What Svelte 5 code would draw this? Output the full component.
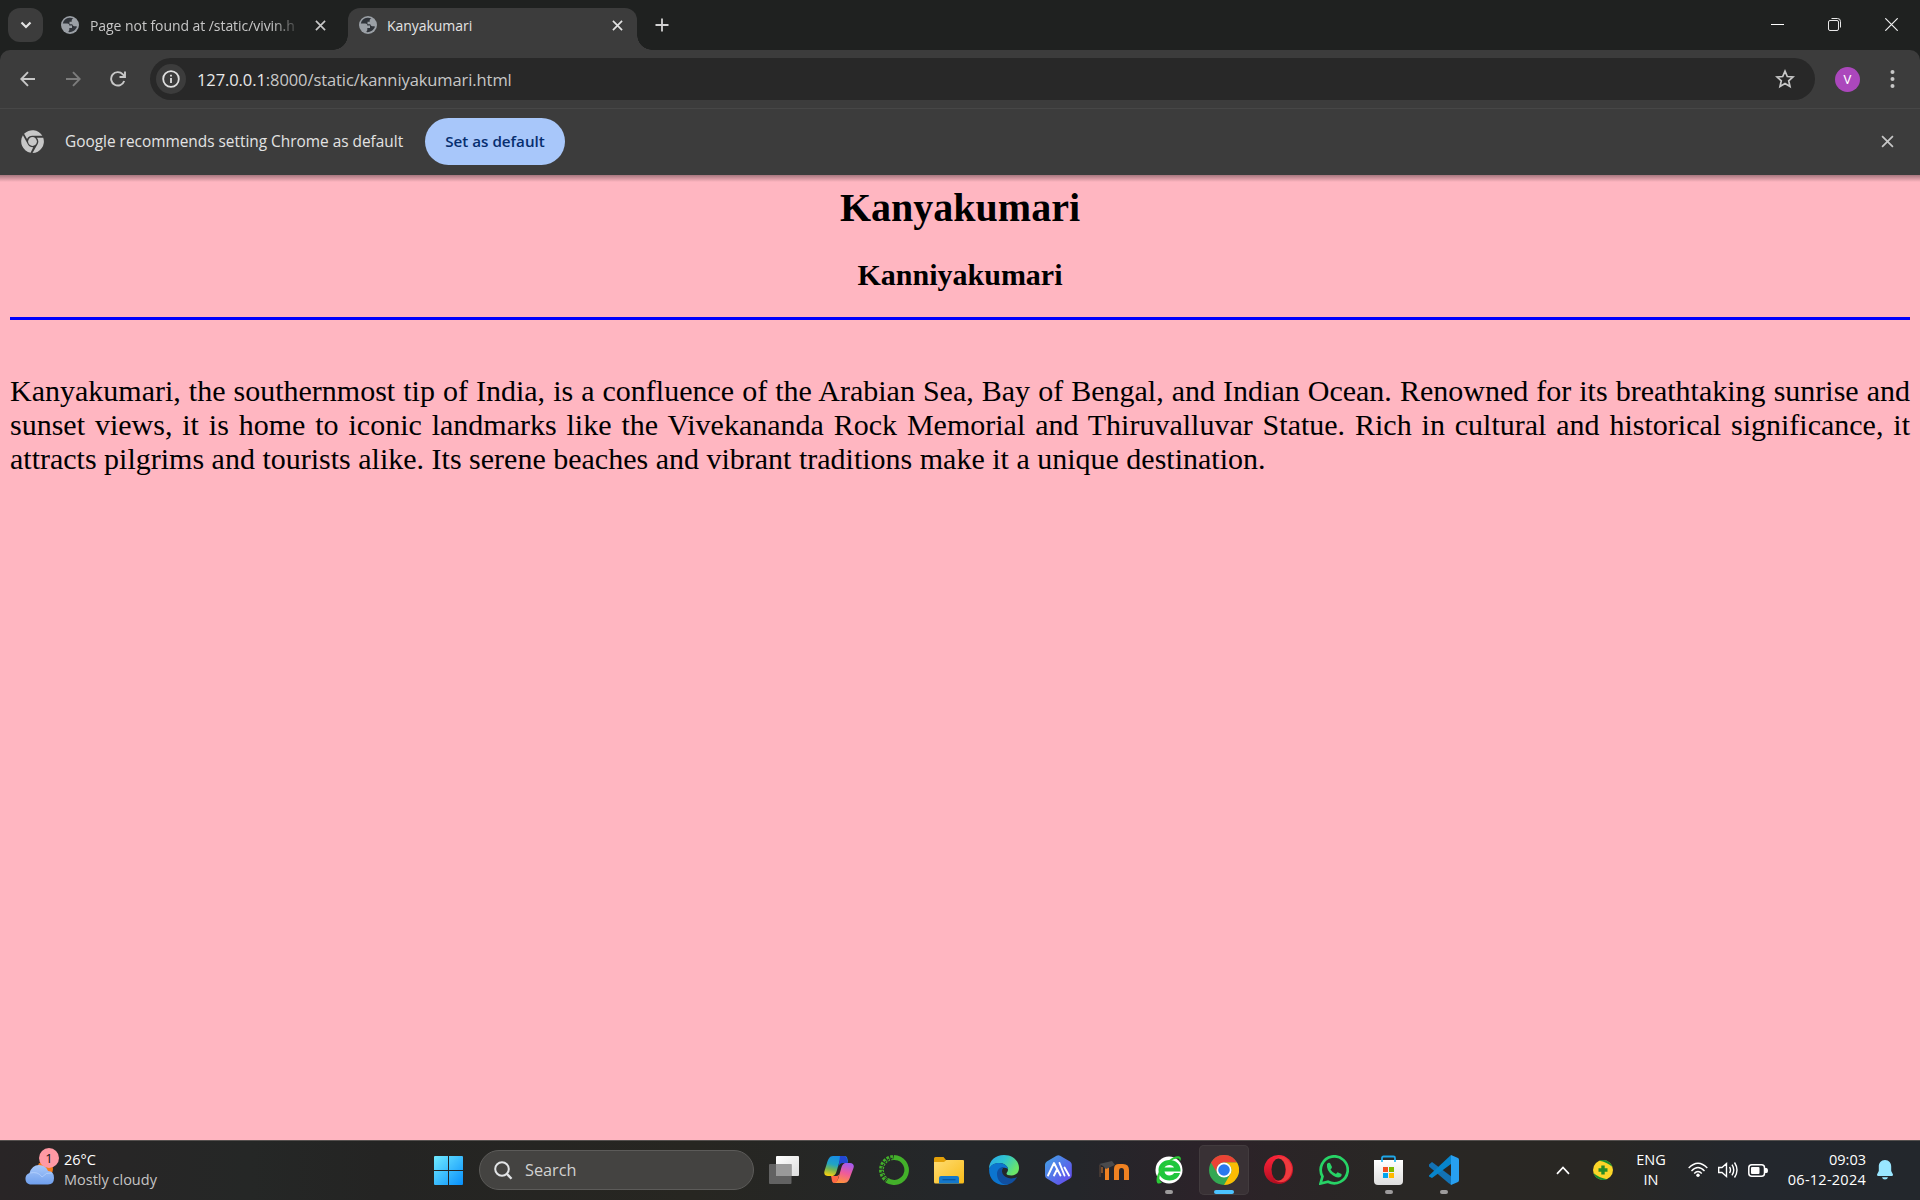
<script>
  const running = { chrome: 'active', ie: 'idle', store: 'idle', code: 'idle' };
  const apps = ['tasks', 'copilot', 'ring', 'folder', 'edge', 'hex', 'moodle', 'ie', 'chrome', 'opera', 'whatsapp', 'store', 'code'];
</script>

{#snippet globe()}
  <svg class="globe" width="18" height="18" viewBox="0 0 18 18">
    <circle cx="9" cy="9" r="9" fill="#9ba0a6" />
    <path d="M8.2 1.7C5 2 2.400 4.300 1.800 7.400L6.300 7.600C7.700 7.600 8.300 8.500 8.300 9.600H11V12H8.300V14.300L7 16C10.500 16.800 14.500 14.600 15.900 11L15.500 10.200H13.300C12.100 10.200 11.500 9.400 11.300 8.300H8.500V5.700H10.700V4.600C10.700 3.500 11.500 2.900 12.500 2.600C11.200 1.800 9.700 1.500 8.200 1.700Z" fill="#30343a" />
    <path d="M1.800 7.800L6 12V13.200L7.300 14.300V16C4 15.300 1.500 11.500 1.800 7.800Z" fill="#9ba0a6" />
  </svg>
{/snippet}

{#snippet cross(size, weight)}
  <svg width={size} height={size} viewBox="0 0 12 12" fill="none" stroke="currentColor" stroke-width={weight}>
    <path d="M1 1L11 11M11 1L1 11" />
  </svg>
{/snippet}

{#snippet appIcon(name)}
  <svg width="30" height="30" viewBox="0 0 30 30">
    {#if name === 'tasks'}
      <rect x="7" y="1" width="23" height="20" rx="1" fill="url(#tvw)" />
      <rect x="0" y="9" width="22.500" height="20" rx="1" fill="#6b6b6b" opacity=".88" />
      <path d="M7 9H22.500V21H7Z" fill="#9a9a9a" />
    {:else if name === 'copilot'}
      <path d="M21 1H9C5.500 1 4 4.500 3 8L.5 16C-.5 19.500 1.500 21 4 21H8C11 21 12 18.500 13 15L15 8C16 4.500 17 2.500 19 2.500L22 7H24C23.500 3 23 1 21 1Z" fill="url(#cpa)" />
      <path d="M16 1H20C22.500 1 23 3.500 24 8H19C16.500 8 15.500 9.500 14.500 12Z" fill="#2347d3" />
      <path d="M9 28H20C24 28 25.500 24.500 26.500 21L29.500 13C30.500 10 29 8 26 8H22C19 8 18 10.500 17 14L15 21C14 25 13 27 9 28Z" fill="url(#cpb)" />
      <path d="M7 21H12C14.500 21 15.500 19 16 17L14 24C13 27 11.500 28 10 28C7.500 28 8 24 7 21Z" fill="#ff6844" />
    {:else if name === 'ring'}
      <path d="M15 0A15 15 0 1 1 6.500 27.400L9.500 23A10 10 0 1 0 14 5Z" fill="#43b02a" />
      <path d="M14 2.500A12.500 12.500 0 0 0 7.500 25" fill="none" stroke="#43b02a" stroke-width="4.800" stroke-dasharray="2.500 1.200" />
      <path d="M13.500 3.500A11.500 11.500 0 0 0 6.500 23" fill="none" stroke="#25302a" stroke-width="1.300" stroke-dasharray="1.500 2" />
    {:else if name === 'folder'}
      <path d="M0 3.500A1.500 1.500 0 0 1 1.500 2H9.500L12 5H20V12H0Z" fill="#e3a008" />
      <path d="M0 7H10L12.500 5H29A1 1 0 0 1 30 6V27A1.500 1.500 0 0 1 28.500 28.500H1.500A1.500 1.500 0 0 1 0 27Z" fill="url(#fld)" />
      <path d="M5 28.500V23A2 2 0 0 1 7 21H23A2 2 0 0 1 25 23V28.500Z" fill="#1478cb" />
      <path d="M8.500 24.700H21.500" stroke="#07549d" stroke-width="1.200" />
    {:else if name === 'edge'}
      <path d="M0 14C0 5.500 6.500 0 15 0C24 0 30 6 30 13C30 18 26.500 20.500 22.500 20.500C19 20.500 17.500 19.500 17.500 18.500C17.500 17.500 19 17 19 14.500C19 11 15 8 10.500 8C6 8 2 10 0 14Z" fill="url(#edg)" />
      <path d="M0 14C2 9.500 6 8 10.500 8C15 8 19 11 19 14.500C18 12 11 11 11 19C11 25 16 29 20 29C12 32 0 28 0 14Z" fill="#0c75cf" />
      <path d="M8 19C8 13.500 12 11.500 15.500 12C13 13 12.500 16 13.500 18.500C15.500 23 22 25 28 22C25.500 27.500 20 30 16 29.500C11 28.500 8 24 8 19Z" fill="#104fa0" />
    {:else if name === 'hex'}
      <path d="M12.500 .7Q14.300 -.4 16.100 .7L26 6.400Q27.800 7.500 27.800 9.700V20.300Q27.800 22.500 26 23.600L16.100 29.300Q14.300 30.400 12.500 29.300L2.800 23.600Q1 22.500 1 20.300V9.700Q1 7.500 2.800 6.400Z" fill="url(#hex)" />
      <path d="M4 20.500L10 8L16.500 20.500M10 20.500L13 14.500M15.500 8L20.500 20.500M20.500 12.500L25 20.500" fill="none" stroke="#fff" stroke-width="1.900" stroke-linecap="round" stroke-linejoin="round" />
    {:else if name === 'moodle'}
      <path d="M6 25V11.500H10V25ZM15 25V14Q15 9 20 9H24Q30 9 30 15V25H25V16Q25 13 22.500 13Q20 13 20 16V25Z" fill="#f08222" />
      <path d="M3 18L3 12" stroke="#80502d" stroke-width="2" />
      <path d="M0 9L13 6L16 10L7 14L4 11Z" fill="#4a4a4c" />
      <path d="M1 10V22" stroke="#604b3c" stroke-width="1" />
    {:else if name === 'ie'}
      <circle cx="15" cy="15" r="13.500" fill="#fff" />
      <path d="M26 18H20C19 21 11 22 10.500 16.500H26.500C27 9.500 22 5 15.500 5C9 5 4.500 9.500 4.500 15C4.500 21 9 25.500 15.500 25.500C21 25.500 25 22.500 26 18ZM10.500 12.500C12 9 19 9 20 12.500Z" fill="#1fc63c" />
      <path d="M8 27.500C1 32 1 22 6.500 14.500C12 6 21 -.5 25.500 1.500C28 3 26.500 6 25.500 6.500C26 4 25 3 22.500 3.500C18 4.500 14 7.500 10.500 11.500C5 18 3.500 26 8 27.500Z" fill="#2acb36" />
    {:else if name === 'chrome'}
      <circle cx="15" cy="15" r="15" fill="#33a852" />
      <path d="M2 7.500A15 15 0 0 1 28 7.500H15A7.500 7.500 0 0 0 8.500 18.700Z" fill="#ea4335" />
      <path d="M15 7.500H28A15 15 0 0 1 15 30L21.500 18.700A7.500 7.500 0 0 0 15 7.500Z" fill="#fbbc04" />
      <circle cx="15" cy="15" r="7.500" fill="#fff" /><circle cx="15" cy="15" r="5.800" fill="#2878ed" />
    {:else if name === 'opera'}
      <circle cx="14.500" cy="14.500" r="14.500" fill="url(#opr)" />
      <path d="M10 5C14 .5 21 1 24 5C30 11 29 20 23 25C18 29 12 27 10 24C15 28 22 24 22 14.500C22 5 15 1 10 5Z" fill="#ef3b3e" />
      <ellipse cx="14.500" cy="14.500" rx="7" ry="11" fill="#292524" />
    {:else if name === 'whatsapp'}
      <path d="M1.500 28.500L3.500 21.500A13.500 13.500 0 1 1 9 26.800Z" fill="none" stroke="#27d366" stroke-width="2.700" />
      <path d="M8 9Q9.500 7 11 8L13 12Q13 13 11.500 14.500Q13.500 18 17 19L18.500 17.200L22.500 19Q23 20 22 21.500Q19 24 14 20.500Q7 16 8 9Z" fill="#27d366" />
    {:else if name === 'store'}
      <path d="M8 8V3A1.500 1.500 0 0 1 9.500 1.500H19.500A1.500 1.500 0 0 1 21 3V8" fill="none" stroke="#1fa7e8" stroke-width="1.800" />
      <path d="M0 5H29V26A4 4 0 0 1 25 30H4A4 4 0 0 1 0 26Z" fill="url(#str)" /><path d="M8 5V7M21 5V7" stroke="#38bff4" stroke-width="1.800" />
      <path d="M9 12H14V17H9Z" fill="#f25022" /><path d="M15 12H20V17H15Z" fill="#7fba00" /><path d="M9 18H14V23H9Z" fill="#00a4ef" /><path d="M15 18H20V23H15Z" fill="#ffb900" />
    {:else}
      <path d="M0 9.500L3 7L23 22V29.500L20 28.500L0 11.500Z" fill="#1372b5" />
      <path d="M0 20.500L22 0V9L3 23L0 21.500Z" fill="#0785cc" />
      <path d="M22 0L29 3Q30 3.500 30 5V25Q30 26.500 29 27L22 30Q21 29.500 22 28Z" fill="#279ff0" />
    {/if}
  </svg>
{/snippet}

<svg class="defs" width="0" height="0">
  <defs>
    <linearGradient id="tvw" x2="1" y2="1"><stop stop-color="#fff" /><stop offset="1" stop-color="#ddd" /></linearGradient>
    <linearGradient id="cpa" x1=".6" x2=".3" y2="1"><stop stop-color="#168bea" /><stop offset=".45" stop-color="#22a4c3" /><stop offset=".7" stop-color="#74b653" /><stop offset="1" stop-color="#f3cf13" /></linearGradient>
    <linearGradient id="cpb" x1=".7" x2=".4" y2="1"><stop stop-color="#a35af0" /><stop offset=".5" stop-color="#ef5b9a" /><stop offset="1" stop-color="#ff923c" /></linearGradient>
    <linearGradient id="fld" x2="1" y2="1"><stop stop-color="#ffdc72" /><stop offset="1" stop-color="#f8bb18" /></linearGradient>
    <linearGradient id="edg" x2="1" y2=".5"><stop stop-color="#28a5ec" /><stop offset=".5" stop-color="#30c4cf" /><stop offset="1" stop-color="#6be568" /></linearGradient>
    <linearGradient id="hex" x2="1" y2="1"><stop stop-color="#42a5e5" /><stop offset="1" stop-color="#6743ed" /></linearGradient>
    <linearGradient id="opr" x2="0" y2="1"><stop stop-color="#ff2439" /><stop offset="1" stop-color="#b10c20" /></linearGradient>
    <linearGradient id="str" x2="0" y2="1"><stop stop-color="#fff" /><stop offset="1" stop-color="#dedede" /></linearGradient>
    <linearGradient id="win" x2="1" y2="1"><stop stop-color="#70eaff" /><stop offset="1" stop-color="#078ffb" /></linearGradient>
    <linearGradient id="cld" x2="0" y2="1"><stop stop-color="#a9c9fa" /><stop offset="1" stop-color="#6f9fed" /></linearGradient>
  </defs>
</svg>

<div class="screen">
  <header class="tabs">
    <button class="tabsearch" aria-label="Search tabs">
      <svg width="12" height="8" viewBox="0 0 12 8" fill="none" stroke="#e3e3e3" stroke-width="2.200"><path d="M1.500 1.500L6 6L10.500 1.500" /></svg>
    </button>
    <div class="tab back">
      {@render globe()}<span class="title faded">Page not found at /static/vivin.h</span><span class="x">{@render cross(11, 1.8)}</span>
    </div>
    <div class="tab active">
      {@render globe()}<span class="title">Kanyakumari</span><span class="x">{@render cross(11, 1.8)}</span>
    </div>
    <svg class="plus" width="14" height="14" viewBox="0 0 14 14" stroke="#d2d2d2" stroke-width="1.800"><path d="M7 .5V13.500M.5 7H13.500" /></svg>
    <div class="winbtns">
      <svg width="13" height="13" viewBox="0 0 13 13" stroke="#fff"><path d="M0 6.500H13" /></svg>
      <svg width="13" height="13" viewBox="0 0 13 13" fill="none" stroke="#e8e8e8"><path d="M3.500 .5H9.500Q12.500 .5 12.500 3.500V9.500" /><rect x=".5" y="2.500" width="10" height="10" rx="1.500" /></svg>
      <svg width="13" height="13" viewBox="0 0 13 13" stroke="#f0f0f0" stroke-width="1.200"><path d="M.3 .3L12.700 12.700M12.700 .3L.3 12.700" /></svg>
    </div>
  </header>

  <nav class="toolbar">
    <svg class="nav" width="16" height="16" viewBox="0 0 16 16" fill="none" stroke="#c7c7c7" stroke-width="1.900"><path d="M15 8H1.500M8 1.200L1.300 8L8 14.800" /></svg>
    <svg class="nav" width="16" height="16" viewBox="0 0 16 16" fill="none" stroke="#7c7c7c" stroke-width="1.900"><path d="M1 8H14.500M8 1.200L14.700 8L8 14.800" /></svg>
    <svg class="nav" width="16" height="16" viewBox="0 0 16 16" fill="none" stroke="#c7c7c7" stroke-width="1.900"><path d="M14.200 10A6.700 6.700 0 1 1 12.800 3.300L15 5.700M15 .5V6H9.500" /></svg>
    <div class="omnibox">
      <span class="info"><svg width="18" height="18" viewBox="0 0 18 18" fill="none" stroke="#dfdfdf" stroke-width="1.800"><circle cx="9" cy="9" r="7.800" /><path d="M9 8V13M9 4.800V6.600" /></svg></span>
      <span class="url"><span class="host">127.0.0.1</span>:8000/static/kanniyakumari.html</span>
      <svg class="star" width="20" height="20" viewBox="0 0 20 20" fill="none" stroke="#c7c7c7" stroke-width="1.700"><path d="M10 2.200L12.300 7.500L18 8L13.700 11.800L15 17.500L10 14.500L5 17.500L6.300 11.800L2 8L7.700 7.500Z" /></svg>
    </div>
    <span class="avatar">V</span>
    <svg class="dots" width="5" height="18" viewBox="0 0 5 18" fill="#c7c7c7"><circle cx="2.500" cy="2" r="2" /><circle cx="2.500" cy="9" r="2" /><circle cx="2.500" cy="16" r="2" /></svg>
  </nav>

  <section class="infobar">
    <svg width="23" height="23" viewBox="0 0 24 24" fill="#c7c7c7">
      <circle cx="12" cy="12" r="4.600" />
      <path d="M3.200 4A12 12 0 0 1 22.300 6H12A6.300 6.300 0 0 0 6.300 9.300Z" />
      <path d="M2 5.600L7 14.600A6.200 6.200 0 0 0 12.800 18L10 23.700A12 12 0 0 1 2 5.600Z" />
      <path d="M23.200 8A12 12 0 0 1 12 24L17.400 14.700A6.300 6.300 0 0 0 16.500 8Z" />
    </svg>
    <span class="notice">Google recommends setting Chrome as default</span>
    <button class="setdefault">Set as default</button>
    <span class="dismiss">{@render cross(13, 1.6)}</span>
  </section>

  <main>
    <h1>Kanyakumari</h1>
    <h2>Kanniyakumari</h2>
    <hr />
    <p>Kanyakumari, the southernmost tip of India, is a confluence of the Arabian Sea, Bay of Bengal, and Indian Ocean. Renowned for its breathtaking sunrise and sunset views, it is home to iconic landmarks like the Vivekananda Rock Memorial and Thiruvalluvar Statue. Rich in cultural and historical significance, it attracts pilgrims and tourists alike. Its serene beaches and vibrant traditions make it a unique destination.</p>
  </main>

  <footer>
    <div class="weather">
      <div class="cloud">
        <svg width="32" height="38" viewBox="0 0 32 38"><circle cx="21" cy="20" r="8" fill="#f77b19" /><path d="M6 35.500A6 6 0 0 1 5.500 24Q8 16 15 16Q22 16 24 22Q30 22 30 29Q30 35.500 24 35.500Z" fill="url(#cld)" /><path d="M6 24Q14 22 18 28Q22 23 28 24" fill="none" stroke="#c0d8ff" stroke-width="1" opacity=".6" /></svg>
        <span class="badge">1</span>
      </div>
      <div class="wtext"><span class="temp">26°C</span><span class="sky">Mostly cloudy</span></div>
    </div>
    <div class="start"><svg width="29" height="29" viewBox="0 0 29 29"><path d="M0 1Q0 0 1 0H14V14H0ZM15 0H28Q29 0 29 1V14H15ZM0 15H14V29H1Q0 29 0 28ZM15 15H29V28Q29 29 28 29H15Z" fill="url(#win)" /></svg></div>
    <div class="search">
      <svg width="19" height="19" viewBox="0 0 19 19" fill="none" stroke="#e2e4e6" stroke-width="2"><circle cx="8" cy="8" r="6.800" /><path d="M12.800 12.800L17.500 17.800" stroke-width="2.400" /></svg>
      <span>Search</span>
    </div>
    <div class="apps">
      {#each apps as name}
        <div class="app {running[name] ?? ''}">{@render appIcon(name)}</div>
      {/each}
    </div>
    <div class="tray">
      <svg class="up" width="14" height="9" viewBox="0 0 14 9" fill="none" stroke="#fff" stroke-width="1.700"><path d="M1 7.800L7 1.500L13 7.800" /></svg>
      <svg class="shield" width="20" height="20" viewBox="0 0 20 20"><circle cx="10" cy="10" r="10" fill="#fbd528" /><path d="M6 .8A10 10 0 0 1 19.500 7Q14 2 6 .8ZM.5 13A10 10 0 0 0 14 19.200Q6 18 .5 13Z" fill="#168c32" /><path d="M8.300 5.500H11.700V8.300H14.500V11.700H11.700V14.500H8.300V11.700H5.500V8.300H8.300Z" fill="#268b26" /></svg>
      <span class="lang"><span>ENG</span><span>IN</span></span>
      <svg class="wifi" width="20" height="16" viewBox="0 0 20 16" fill="none" stroke="#fff" stroke-width="1.400"><path d="M.7 6Q10 -3.500 19.300 6M3.500 9Q10 2 16.500 9M6.200 11.500Q10 7.500 13.800 11.500" /><circle cx="10" cy="13.300" r="1.700" fill="#fff" stroke="none" /></svg>
      <svg class="vol" width="20" height="18" viewBox="0 0 20 18" fill="none" stroke="#fff" stroke-width="1.400"><path d="M.7 6.500V11.500H4L8.500 15.500V2.500L4 6.500ZM11.500 6Q13.500 9 11.500 12M14 3.700Q17.500 9 14 14.300M16.500 1.500Q21.500 9 16.500 16.500" /></svg>
      <svg class="bat" width="20" height="13" viewBox="0 0 20 13"><rect x=".8" y=".8" width="15.700" height="11.400" rx="3" fill="none" stroke="#fff" stroke-width="1.500" /><rect x="3" y="3" width="8.500" height="7" rx="1" fill="#fff" /><path d="M17 4H18.500Q20 4 20 6.500Q20 9 18.500 9H17Z" fill="#fff" /></svg>
      <span class="clock"><span class="time">09:03</span><span class="date">06-12-2024</span></span>
      <svg width="16" height="20" viewBox="0 0 16 20" fill="#99e6ff"><path d="M8 0C4 0 1.800 3 1.800 6.500V11L0 14.500Q0 16 1.200 16H14.800Q16 16 16 14.500L14.200 11V6.500C14.200 3 12 0 8 0ZM5 17.300H11Q10.500 19.500 8 19.500Q5.500 19.500 5 17.300Z" /></svg>
    </div>
  </footer>
</div>

<style>
  :global(body) { margin: 0; overflow: hidden; }
  svg { display: block; flex: none; }
  .defs { position: absolute; }
  button { border: 0; padding: 0; font: inherit; }
  .screen { width: 1920px; height: 1200px; display: flex; flex-direction: column; background: #1f2120; font-family: "Open Sans", "Noto Sans", sans-serif; color: #e3e3e3; }
  .screen > * { flex: none; box-sizing: border-box; }
  span { white-space: nowrap; }

  .tabs { height: 50px; display: flex; align-items: center; padding-left: 8px; background: #1f2120; }
  .tabsearch { width: 35px; height: 34px; border-radius: 12px; background: #3c3c3c; display: flex; align-items: center; justify-content: center; }
  .tab { display: flex; align-items: center; box-sizing: border-box; font-size: 14px; }
  .tab.back { width: 305px; padding: 0 22px 0 18px; color: #c7c7c7; }
  .tab.active { position: relative; width: 289px; height: 42px; align-self: flex-end; background: #3c3c3c; border-radius: 12px 12px 0 0; padding: 0 14px 8px 11px; }
  .tab.active::before, .tab.active::after { content: ""; position: absolute; bottom: 0; width: 15px; height: 15px; }
  .tab.active::before { right: 100%; background: radial-gradient(circle at 0 0, transparent 14.500px, #3c3c3c 15px); }
  .tab.active::after { left: 100%; background: radial-gradient(circle at 100% 0, transparent 14.500px, #3c3c3c 15px); }
  .title { flex: 1; margin-left: 10px; letter-spacing: -.05px; }
  .title.faded { flex: 0 0 212px; margin-left: 11px; margin-right: auto; letter-spacing: -.06px; -webkit-mask-image: linear-gradient(90deg, #000 86%, transparent); mask-image: linear-gradient(90deg, #000 86%, transparent); }
  .plus { margin-left: 18px; }
  .winbtns { margin-left: auto; display: flex; gap: 44px; padding: 0 22px 2px 0; }

  .toolbar { height: 58px; display: flex; align-items: center; background: #3c3c3c; border-radius: 10px 10px 0 0; padding-left: 20px; }
  .nav { margin-right: 29px; }
  .omnibox { width: 1665px; height: 42px; box-sizing: border-box; margin-left: -5px; background: #282828; border-radius: 21px; display: flex; align-items: center; padding: 0 20px 0 6px; }
  .info { width: 30px; height: 30px; border-radius: 50%; background: #3c3c3c; display: flex; align-items: center; justify-content: center; }
  .url { flex: 1; margin-left: 11px; font-size: 16.500px; letter-spacing: -.09px; color: #c7c7c7; }
  .host { color: #e8e8e8; }
  .avatar { width: 25px; height: 25px; margin-left: 20px; border-radius: 50%; background: #ab47bc; color: #fff; font: 13px/25px Roboto, sans-serif; text-align: center; }
  .dots { margin-left: 30px; }

  .infobar { height: 67px; border-top: 1px solid #474747; background: #3c3c3c; display: flex; align-items: center; padding: 0 26px 2px 21px; }
  .notice { margin-left: 21px; width: 360px; font-size: 15.400px; }
  .setdefault { width: 140px; height: 47px; border-radius: 23.500px; background: #a8c7fa; color: #062e6f; font-size: 15.200px; font-weight: 600; }
  .dismiss { margin-left: auto; color: #c7c7c7; }

  main { height: 965px; background: linear-gradient(rgba(60, 40, 45, .45), transparent 7px), #ffb6c1; color: #000; font-family: "Liberation Serif", serif; padding: 10px 10px 0; }
  h1 { margin: 0 0 27px; font-size: 40px; line-height: 46px; text-align: center; }
  h2 { margin: 0 0 25px; font-size: 30px; line-height: 34px; text-align: center; }
  hr { height: 3px; border: 0; margin: 0 0 54px; background: #00f; }
  p { margin: 0; font-size: 30px; line-height: 34px; text-align: justify; }

  footer { height: 60px; border-top: 1px solid #55504e; padding-bottom: 1px; display: flex; align-items: center; background: linear-gradient(90deg, #292526, #252726 13%, #242423 20%, #272621 36%, #24272a 50%, #24262a 56%, #2d2229 64%, #2b2427 66%, #292725 72%, #292723 83%, #23272d 91%, #23272c); }
  .weather { width: 423px; display: flex; padding-left: 24px; box-sizing: border-box; }
  .cloud { position: relative; width: 40px; height: 40px; }
  .cloud > svg { margin-top: -1px; }
  .badge { position: absolute; left: 15px; top: -2px; width: 20px; height: 20px; border-radius: 50%; background: #ff99a4; color: #111; font-size: 13px; line-height: 20px; text-align: center; }
  .wtext, .lang, .clock { display: flex; flex-direction: column; font-size: 14.500px; line-height: 20px; }
  .temp { color: #fff; }
  .sky { color: #c5c4c4; }
  .start { width: 50px; display: flex; justify-content: center; }
  .search { width: 275px; height: 40px; box-sizing: border-box; margin-left: 6px; padding-left: 14px; border: 1px solid #5c5b59; border-radius: 20px; background: #444341; display: flex; align-items: center; gap: 12px; font-size: 16.300px; color: #d2d2d1; }
  .apps { display: flex; gap: 5px; margin-left: 5px; }
  .app { position: relative; width: 50px; height: 50px; box-sizing: border-box; display: flex; align-items: center; justify-content: center; border-radius: 5px; }
  .app.active { background: #393135; box-shadow: inset 0 0 0 1px #423b3e; }
  .app.idle::after, .app.active::after { content: ""; position: absolute; bottom: 1px; width: 8px; height: 4px; border-radius: 2px; background: #9d9b9c; }
  .app.active::after { width: 20px; background: #4cc2ff; }
  .tray { flex: 1; display: flex; align-items: center; justify-content: flex-end; padding-right: 27px; color: #fff; }
  .shield { margin-left: 23px; }
  .lang { width: 38px; margin: 0 18px 0 19px; align-items: center; }
  .vol, .bat { margin-left: 10px; }
  .clock { width: 98px; align-items: flex-end; margin-right: 11px; }
  .date { letter-spacing: .25px; }
</style>
